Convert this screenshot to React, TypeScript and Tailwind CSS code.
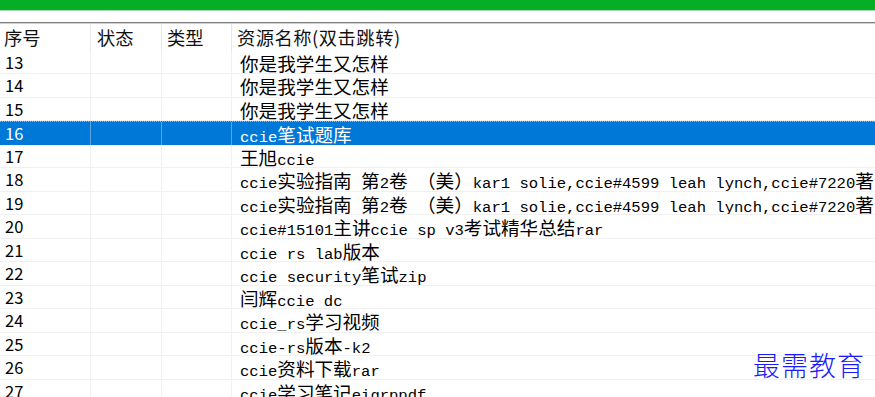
import React from "react";

const rows: [string, string][] = [
  ["13", "你是我学生又怎样"],
  ["14", "你是我学生又怎样"],
  ["15", "你是我学生又怎样"],
  ["16", "ccie笔试题库"],
  ["17", "王旭ccie"],
  ["18", "ccie实验指南 第2卷 （美）kar1 solie,ccie#4599 leah lynch,ccie#7220著"],
  ["19", "ccie实验指南 第2卷 （美）kar1 solie,ccie#4599 leah lynch,ccie#7220著"],
  ["20", "ccie#15101主讲ccie sp v3考试精华总结rar"],
  ["21", "ccie rs lab版本"],
  ["22", "ccie security笔试zip"],
  ["23", "闫辉ccie dc"],
  ["24", "ccie_rs学习视频"],
  ["25", "ccie-rs版本-k2"],
  ["26", "ccie资料下载rar"],
  ["27", "ccie学习笔记eigrppdf"],
];

function Mixed({ text }: { text: string }) {
  const parts = text.split(/([\u3000-\u9fff\uff00-\uffef]+)/).filter((p) => p.length > 0);
  return (
    <>
      {parts.map((p, i) =>
        /[\u3000-\u9fff\uff00-\uffef]/.test(p) ? (
          <span key={i} className="font-['Noto_Sans_CJK_SC',sans-serif] text-[18.6px] leading-[23px]">
            {p}
          </span>
        ) : (
          <span key={i} className="font-['Liberation_Mono',monospace] text-[15.55px] leading-[23px]">
            {p}
          </span>
        )
      )}
    </>
  );
}

export default function App() {
  return (
    <div className="relative w-[875px] h-[397px] overflow-hidden bg-white text-black">
      <div className="h-[10px] bg-[#06ae26]" />
      <div className="h-[1px] bg-[#a8d8b0]" />
      <div className="h-[11px] bg-white" />
      <div className="h-[1px] bg-[#7f7f7f]" />
      <div className="h-[1px] bg-[#cfcfcf]" />
      <div className="flex h-[26.5px] font-['Noto_Sans_CJK_SC',sans-serif] text-[18.3px] leading-[26px] text-[#111]">
        <div className="w-[91px] shrink-0 border-r border-[#e8e8e8] pl-[4px]">序号</div>
        <div className="w-[71px] shrink-0 border-r border-[#e8e8e8] pl-[6px]">状态</div>
        <div className="w-[70px] shrink-0 border-r border-[#e8e8e8] pl-[5px]">类型</div>
        <div className="flex-1 pl-[5px] whitespace-nowrap tracking-[0.5px]">资源名称(双击跳转)</div>
      </div>
      <div className="flex flex-col">
        {rows.map(([n, t]) => {
          const sel = n === "16";
          return (
            <div
              key={n}
              className={
                sel
                  ? "flex h-[23.5px] shrink-0 bg-[#0078d7] text-white border-t border-dotted border-[#f0a060]"
                  : "flex h-[23.5px] shrink-0 border-b border-[#f0f0f0]"
              }
            >
              <div
                className={
                  "w-[91px] shrink-0 border-r pl-[5px] font-['Noto_Sans_CJK_SC',sans-serif] text-[16.5px] leading-[23px] " +
                  (sel ? "border-[#5aa5e5]" : "border-[#f0f0f0]")
                }
              >
                {n}
              </div>
              <div className={"w-[71px] shrink-0 border-r " + (sel ? "border-[#5aa5e5]" : "border-[#f0f0f0]")} />
              <div className={"w-[70px] shrink-0 border-r " + (sel ? "border-[#5aa5e5]" : "border-[#f0f0f0]")} />
              <div className="flex-1 min-w-0 overflow-hidden whitespace-nowrap pl-[8px] leading-[23px]">
                <Mixed text={t} />
              </div>
            </div>
          );
        })}
      </div>
      <div className="absolute left-[753px] top-[350px] font-['Noto_Sans_CJK_SC',serif] font-light text-[27px] leading-[30px] tracking-[1px] text-[#1a1aff]">
        最需教育
      </div>
    </div>
  );
}
